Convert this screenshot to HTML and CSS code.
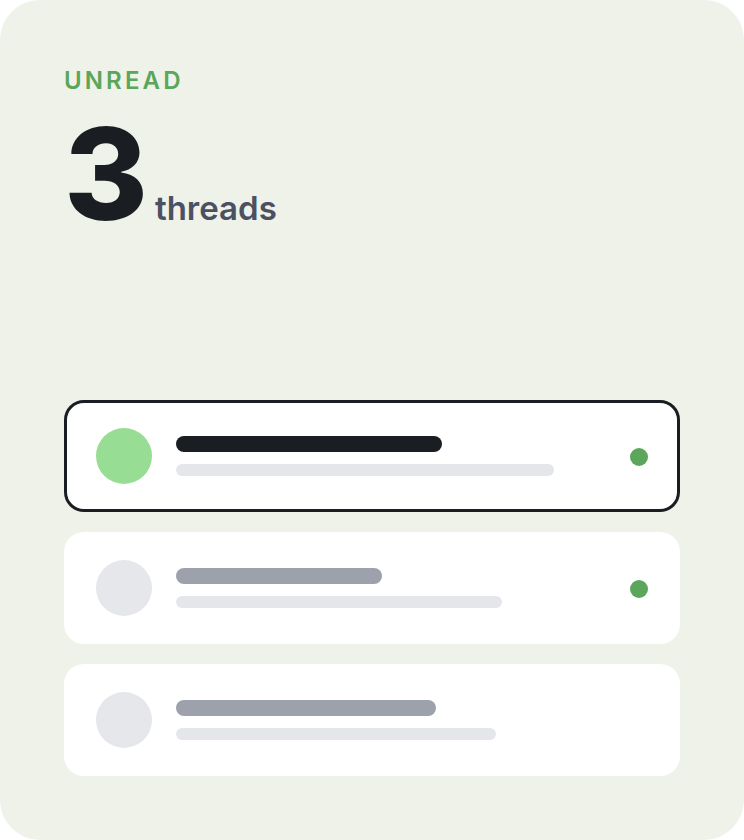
FILE: index.html
```html
<!DOCTYPE html>
<html lang="en">
<head>
<meta charset="utf-8">
<title>Unread threads</title>
<link rel="stylesheet" href="styles.css">
</head>
<body>
<div class="card">
  <div class="header">
    <div class="label">UNREAD</div>
    <div class="count-row">
      <span class="count">3</span>
      <span class="unit">threads</span>
    </div>
  </div>
  <div class="list">
    <div class="row row-active">
      <div class="avatar avatar-active"></div>
      <div class="lines">
        <div class="line-title title-dark" style="width:266px"></div>
        <div class="line-sub" style="width:378px"></div>
      </div>
      <div class="dot"></div>
    </div>
    <div class="row">
      <div class="avatar"></div>
      <div class="lines">
        <div class="line-title" style="width:206px"></div>
        <div class="line-sub" style="width:326px"></div>
      </div>
      <div class="dot"></div>
    </div>
    <div class="row">
      <div class="avatar"></div>
      <div class="lines">
        <div class="line-title" style="width:260px"></div>
        <div class="line-sub" style="width:320px"></div>
      </div>
    </div>
  </div>
</div>
</body>
</html>
```
FILE: styles.css
```css
html, body {
  margin: 0;
  padding: 0;
  background: #ffffff;
}
body {
  font-family: Inter, "Noto Sans", "Liberation Sans", sans-serif;
}
.card {
  box-sizing: border-box;
  width: 744px;
  height: 840px;
  background: #eff2e9;
  border-radius: 40px;
  padding: 64px;
  display: flex;
  flex-direction: column;
}
.label {
  font-size: 24px;
  line-height: 34px;
  font-weight: 600;
  letter-spacing: 0.13em;
  color: #5aa65a;
}
.count-row {
  display: flex;
  align-items: baseline;
  gap: 12px;
  margin-top: 10px;
}
.count {
  font-size: 128px;
  line-height: 132px;
  font-weight: 800;
  color: #1a1e22;
  letter-spacing: -0.04em;
}
.unit {
  font-size: 33px;
  font-weight: 600;
  color: #4b5161;
}
.list {
  margin-top: auto;
  display: flex;
  flex-direction: column;
  gap: 20px;
}
.row {
  box-sizing: border-box;
  height: 112px;
  background: #ffffff;
  border: 3px solid transparent;
  border-radius: 20px;
  padding: 0 29px;
  display: flex;
  align-items: center;
}
.row-active {
  border-color: #1a1e22;
}
.avatar {
  width: 56px;
  height: 56px;
  border-radius: 50%;
  background: #e5e7eb;
  flex: none;
}
.avatar-active {
  background: #98dd94;
}
.lines {
  margin-left: 24px;
  display: flex;
  flex-direction: column;
  gap: 12px;
  flex: 1;
}
.line-title {
  height: 16px;
  border-radius: 8px;
  background: #9da1ab;
}
.title-dark {
  background: #1a1e22;
}
.line-sub {
  height: 12px;
  border-radius: 6px;
  background: #e5e6ea;
}
.dot {
  width: 18px;
  height: 18px;
  border-radius: 50%;
  background: #5ca65c;
  flex: none;
  margin-top: 2px;
}
```
